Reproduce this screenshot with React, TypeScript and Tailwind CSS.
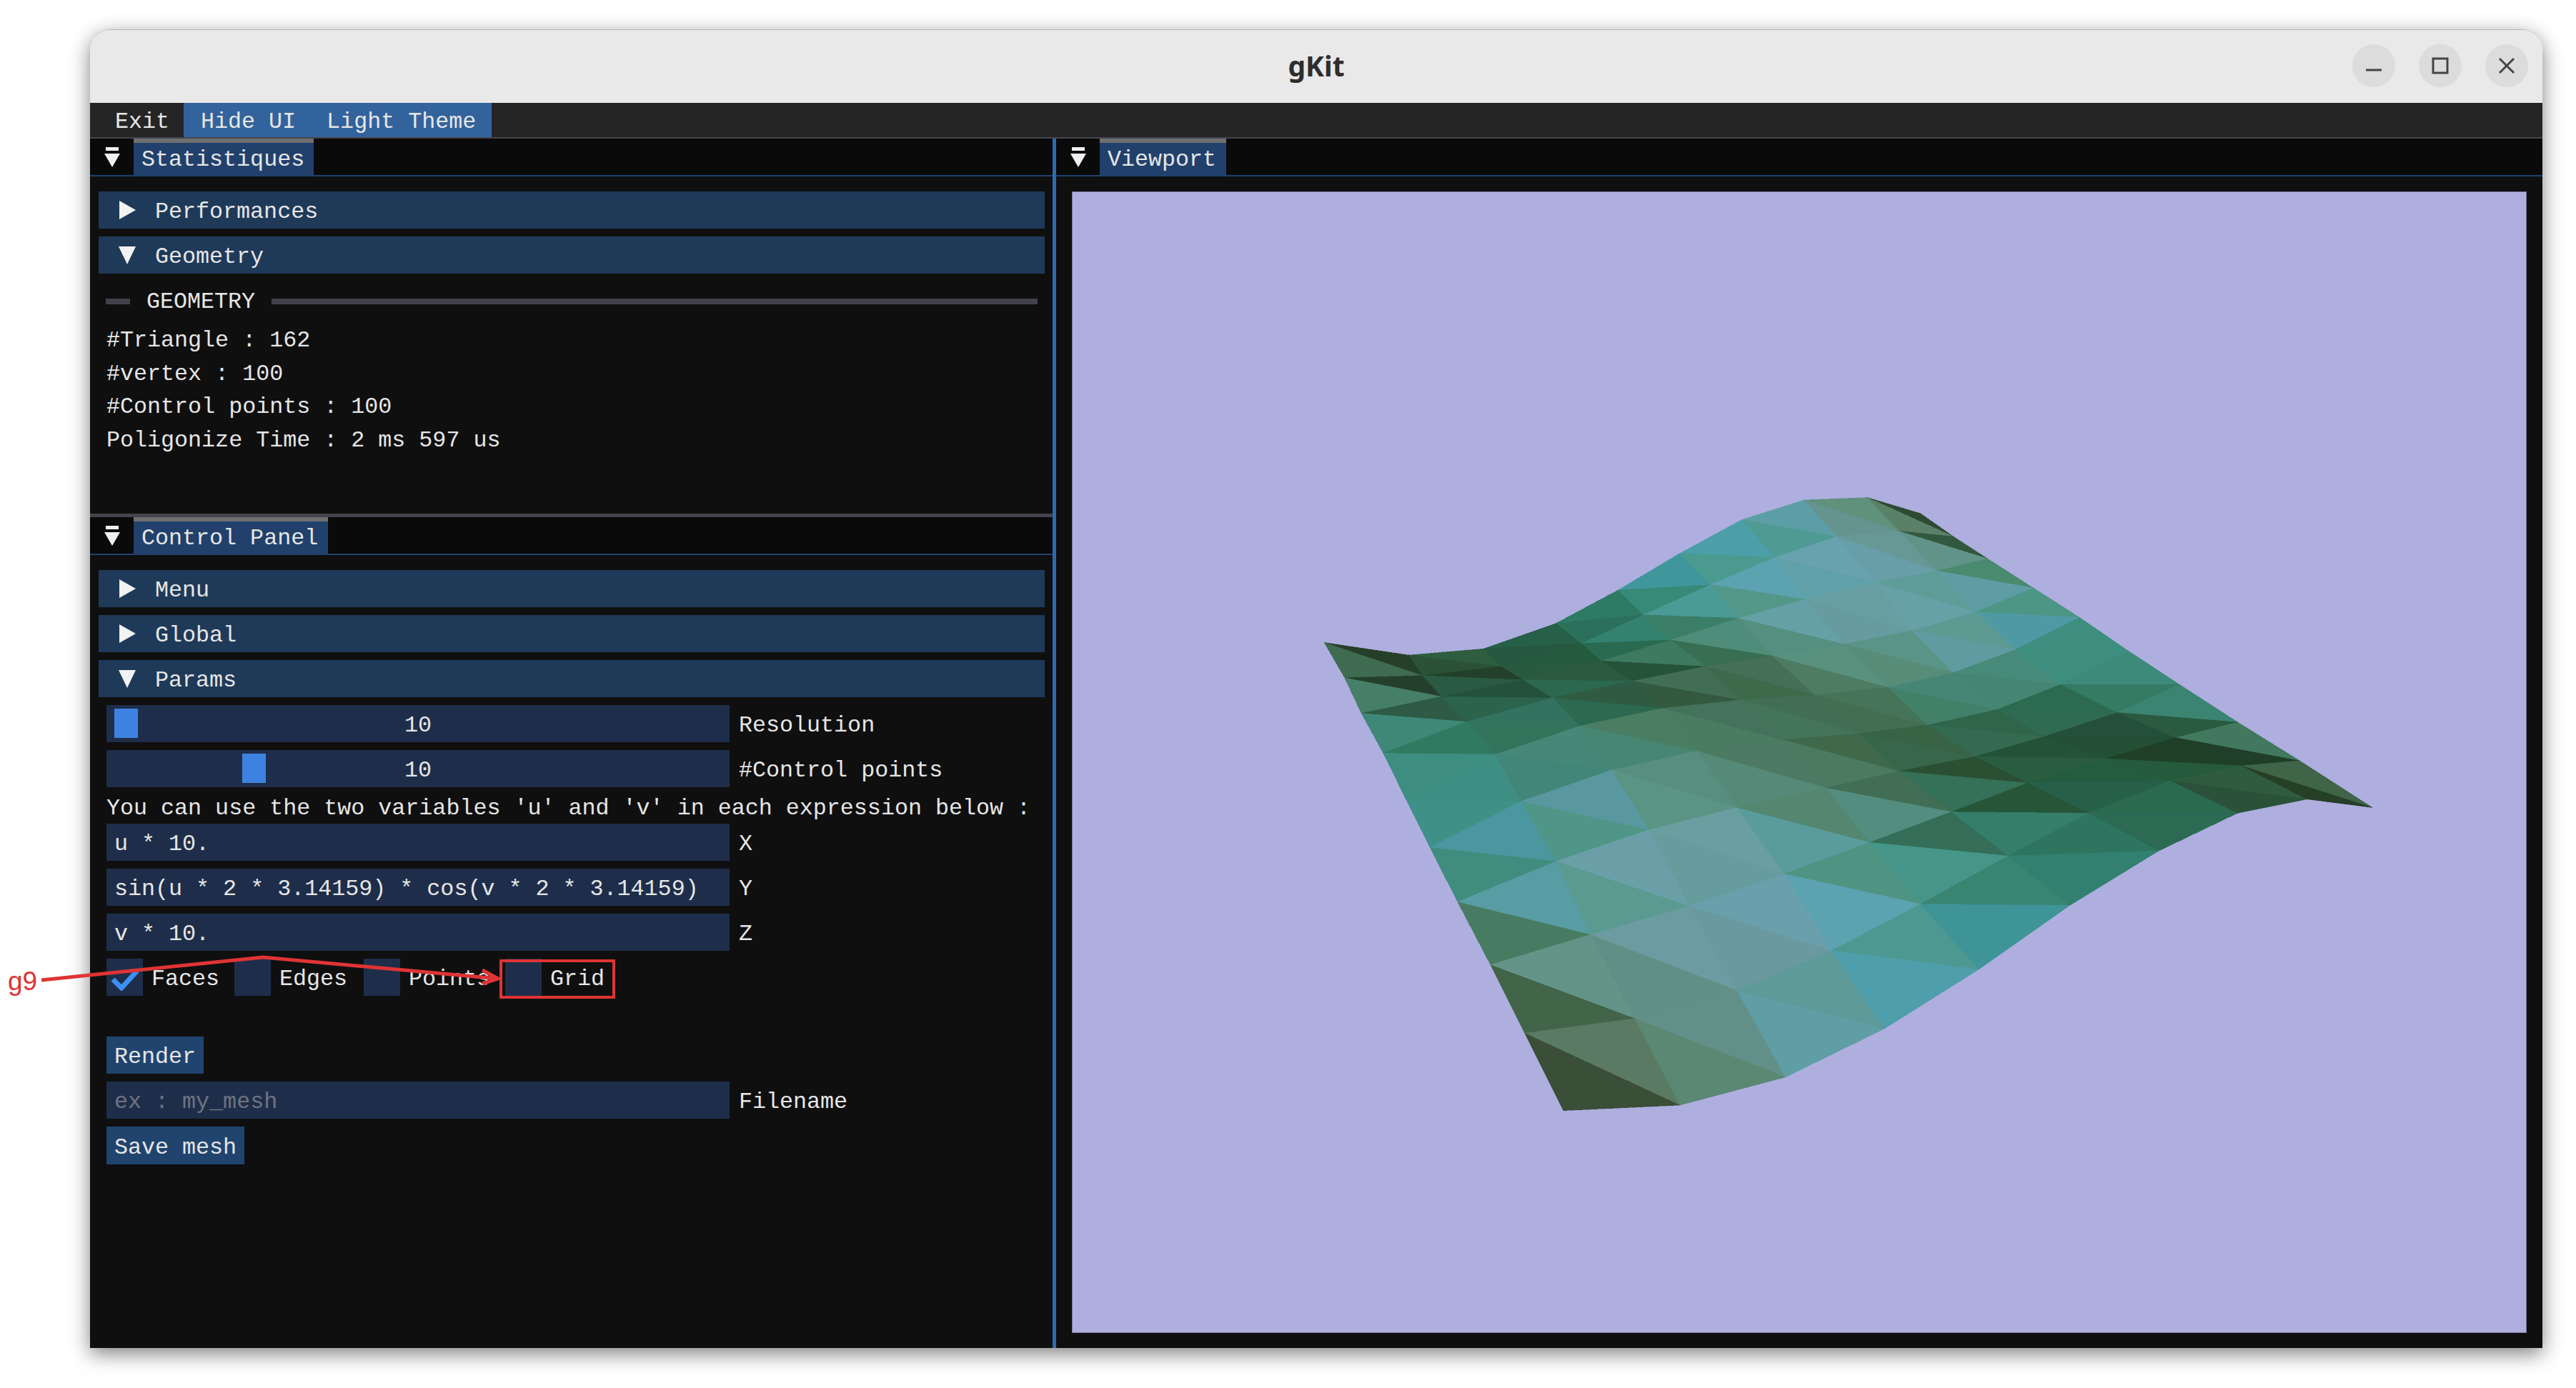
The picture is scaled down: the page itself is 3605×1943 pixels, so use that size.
import React from 'react';

const mono = { fontFamily: '"Liberation Mono", monospace' };

// Mesh vertices, traced column by column (10 x 10 grid)
const columns: number[][][] = [
  [[52,408],[80,492],[103,577],[133,672],[165,785],[197,897],[235,1027],[280,1177],[327,1340],[380,1525]],
  [[168,438],[187,487],[213,537],[247,597],[287,675],[322,787],[370,930],[417,1105],[478,1305],[540,1512]],
  [[270,423],[295,465],[325,497],[365,540],[403,607],[447,712],[497,855],[553,1037],[618,1238],[685,1445]],
  [[370,362],[405,410],[432,452],[475,500],[515,565],[563,667],[618,802],[683,960],[748,1143],[820,1330]],
  [[455,283],[490,342],[527,402],[575,465],[622,545],[680,640],[740,755],[800,885],[870,1032],[950,1188]],
  [[540,195],[582,270],[620,350],[667,440],[725,533],[785,625],[840,715],[912,812],[990,917],[1075,1035]],
  [[625,115],[670,205],[712,305],[765,412],[825,515],[880,605],[945,680],[1017,743],[1100,815],[1197,905]],
  [[710,68],[755,155],[808,265],[858,380],[915,480],[975,568],[1040,632],[1125,685],[1213,738],[1305,815]],
  [[797,62],[840,142],[893,237],[945,335],[1000,425],[1062,508],[1140,575],[1220,635],[1310,702],[1400,782]],
  [[870,100],[915,155],[962,208],[1025,278],[1088,348],[1155,428],[1225,508],[1305,598],[1390,690],[1490,802]],
];

// Per quad: [upper triangle, lower triangle]
const quadColors: string[][][] = [
  [['#263f28','#3f6b50'],['#24402c','#467f68'],['#2f5a45','#3f8878'],['#317a62','#3d8d80'],['#3e8f83','#3f9087'],['#4a97a0','#408d7f'],['#589da3','#477c62'],['#649388','#426448'],['#5a7a64','#3a4e38']],
  [['#2f5d40','#2b5237'],['#23402a','#2a5a42'],['#23513a','#2b634c'],['#347260','#32745c'],['#458878','#42867a'],['#5a98a0','#509688'],['#6a9fa8','#5a9a90'],['#6c9ba2','#628f85'],['#629088','#5a8872']],
  [['#276048','#25583f'],['#245a3e','#2a5a3e'],['#2b5a3e','#2c6850'],['#2f5b42','#2d6850'],['#4a7d62','#468672'],['#578e80','#5a9485'],['#6a9ea0','#669c9e'],['#6aa0ac','#6a9aa0'],['#5d9a98','#5f9ea5']],
  [['#2e7a64','#2b705a'],['#338270','#2a6a50'],['#3d7a60','#25533a'],['#426e55','#33593f'],['#44725a','#4a7c62'],['#4c7a62','#558a78'],['#548670','#5a9c9c'],['#4f9482','#5ca2b0'],['#4d9890','#4f9eab']],
  [['#3f979c','#378a78'],['#4a9a96','#3a7e68'],['#4f8c7a','#386e52'],['#466f58','#3c6a4a'],['#426e56','#44745a'],['#40694c','#4c7a60'],['#426e55','#528d80'],['#346e58','#459688'],['#3a8472','#3f9498']],
  [['#4c9ea9','#4a9a90'],['#5ca2b0','#529788'],['#64a0a5','#548f80'],['#58917e','#4e7c62'],['#457458','#436e52'],['#386345','#37664a'],['#2b4f33','#357058'],['#265538','#347e6a'],['#2e7560','#318070']],
  [['#5c9ea5','#4f9a92'],['#68a2ae','#60a0a8'],['#669ea2','#669ca0'],['#5a9486','#578c78'],['#468674','#42806a'],['#2f6548','#346a50'],['#245236','#2a5c40'],['#245c3f','#27604a'],['#2c6a50','#2c6a54']],
  [['#5f917c','#659490'],['#679896','#689ea8'],['#5e9c98','#68a0a8'],['#5c9a92','#5f9ba0'],['#468a7a','#448672'],['#2c6b52','#2f6a52'],['#24503a','#234f35'],['#1f3f27','#255a3c'],['#2f5c3f','#2a5238']],
  [['#2e4a33','#5a8068'],['#32593f','#619388'],['#4a8a6e','#5f9da5'],['#4d9584','#4f9aa2'],['#3e8e80','#3e8e80'],['#3d8a7b','#357a62'],['#3c8472','#2a5a40'],['#41785e','#203f28'],['#3f6448','#263f27']],
];

const Mesh = () => (
  <svg
    className="absolute left-[299px] top-[391px] w-[1600px] h-[920px]"
    viewBox="0 0 1568 1568"
    preserveAspectRatio="none"
    shapeRendering="crispEdges"
  >
    {quadColors.map((col, j) =>
      col.map((quad, i) => {
        const a = columns[j][i];
        const b = columns[j + 1][i];
        const c = columns[j + 1][i + 1];
        const d = columns[j][i + 1];
        return (
          <g key={`${j}-${i}`}>
            <polygon points={`${a} ${b} ${c}`} fill={quad[0]} stroke={quad[0]} strokeWidth="0.5" />
            <polygon points={`${a} ${c} ${d}`} fill={quad[1]} stroke={quad[1]} strokeWidth="0.5" />
          </g>
        );
      })
    )}
  </svg>
);

const TabMenuIcon = () => (
  <svg className="w-[24px] h-[30px]" viewBox="0 0 24 30">
    <rect x="3" y="1" width="18" height="5" fill="#f0f0f0" />
    <polygon points="1,10 23,10 12,29" fill="#f0f0f0" />
  </svg>
);

const Tab = ({ title, width }: { title: string; width: string }) => (
  <div className="h-[53px] flex bg-[#0a0a0a] border-b-2 border-[#21426e] shrink-0">
    <div className="w-[61px] pl-[19px] flex items-center">
      <TabMenuIcon />
    </div>
    <div className={`${width} h-[53px] bg-[#21416c] border-t-[6px] border-[#6f6f6f] pl-[11px] pt-[2px] flex items-center text-[#e6e6e6]`}>
      {title}
    </div>
  </div>
);

const TreeHeader = ({ label, open, className = '' }: { label: string; open?: boolean; className?: string }) => (
  <div className={`h-[52px] bg-[#1f3a59] flex items-center pl-[27px] text-[#e6e6e6] ${className}`}>
    <svg className="w-[26px] h-[26px] mr-[26px]" viewBox="0 0 26 26">
      {open ? <polygon points="1,1 25,1 13,26" fill="#f2f2f2" /> : <polygon points="2,0 25,13 2,26" fill="#f2f2f2" />}
    </svg>
    <span className="pt-[8px]">{label}</span>
  </div>
);

const Field = ({ children, center, label, muted }: { children: React.ReactNode; center?: boolean; label: string; muted?: boolean }) => (
  <div className="flex items-center h-[52px] mt-[11px] ml-[11px]">
    <div
      className={`relative w-[872px] h-full bg-[#1e2e4a] flex items-center px-[11px] pt-[8px] ${center ? 'justify-center' : ''} ${muted ? 'text-[#6f7480]' : 'text-[#e6e6e6]'}`}
    >
      {children}
    </div>
    <span className="ml-[13px] pt-[8px] text-[#e6e6e6]">{label}</span>
  </div>
);

const Check = ({ label, checked, width }: { label: string; checked?: boolean; width: string }) => (
  <div className={`${width} flex items-center h-full`}>
    <div className="w-[51px] h-full bg-[#1e2e4a] flex items-center justify-center">
      {checked && (
        <svg className="w-[40px] h-[30px] mt-[8px]" viewBox="0 0 40 30">
          <polyline points="3,14 15,26 37,2" fill="none" stroke="#3d8ff0" strokeWidth="7" />
        </svg>
      )}
    </div>
    <span className="ml-[12px] pt-[8px] text-[#e6e6e6]">{label}</span>
  </div>
);

const Annotation = () => (
  <>
    <svg className="absolute inset-0 w-[3605px] h-[1943px] pointer-events-none" viewBox="0 0 3605 1943">
      <polyline points="58,1372 368,1340 697,1370" fill="none" stroke="#df3434" strokeWidth="5" />
      <polyline points="675,1358 697,1370 675,1377" fill="none" stroke="#df3434" strokeWidth="5" />
      <rect x="701" y="1345" width="158" height="51" fill="none" stroke="#df3434" strokeWidth="4" />
    </svg>
    <span
      className="absolute left-[11px] top-[1352px] text-[37px] leading-[44px] text-[#df3434]"
      style={{ fontFamily: '"Liberation Sans", sans-serif' }}
    >
      g9
    </span>
  </>
);

export default function App() {
  return (
    <div className="relative w-[3605px] h-[1943px] overflow-hidden bg-white pl-[126px] pr-[47px] pt-[41px] text-[31.7px] leading-none" style={mono}>
      <div className="h-[1846px] flex flex-col rounded-t-[28px] overflow-hidden border-t border-[#b5b5b5] shadow-[0_8px_28px_rgba(0,0,0,0.5)]">
        {/* Title bar */}
        <div className="h-[102px] bg-[#e9e9e9] relative flex items-center justify-center shrink-0">
          <span className="text-[39px] font-bold text-[#2e2e2e] pb-[4px]" style={{ fontFamily: '"Noto Sans", sans-serif' }}>
            gKit
          </span>
          <div className="absolute right-[20px] top-[20px] flex gap-[33px]">
            <div className="w-[60px] h-[60px] rounded-full bg-[#dcdcdc] flex items-center justify-center">
              <svg className="w-[24px] h-[24px]" viewBox="0 0 24 24">
                <line x1="1" y1="18" x2="23" y2="18" stroke="#444" strokeWidth="3" />
              </svg>
            </div>
            <div className="w-[60px] h-[60px] rounded-full bg-[#dcdcdc] flex items-center justify-center">
              <svg className="w-[24px] h-[24px]" viewBox="0 0 24 24">
                <rect x="2" y="2" width="20" height="20" fill="none" stroke="#444" strokeWidth="3" />
              </svg>
            </div>
            <div className="w-[60px] h-[60px] rounded-full bg-[#dcdcdc] flex items-center justify-center">
              <svg className="w-[24px] h-[24px]" viewBox="0 0 24 24">
                <path d="M2 2 L22 22 M22 2 L2 22" fill="none" stroke="#444" strokeWidth="3" />
              </svg>
            </div>
          </div>
        </div>

        {/* Menu bar */}
        <div className="h-[50px] bg-[#252525] border-b-2 border-[#45454d] flex text-[#e6e6e6] shrink-0">
          <div className="w-[131px] pl-[35px] pt-[8px] flex items-center">Exit</div>
          <div className="w-[431px] bg-[#33639c] pl-[24px] pt-[8px] flex items-center gap-[43px]">
            <span>Hide UI</span>
            <span>Light Theme</span>
          </div>
        </div>

        <div className="flex-1 flex bg-[#0f0f0f] min-h-0">
          {/* Left column */}
          <div className="w-[1347px] flex flex-col">
            <div className="h-[530px] flex flex-col border-b-[5px] border-[#44444f] shrink-0">
              <Tab title="Statistiques" width="w-[252px]" />
              <div className="pt-[21px] pl-[12px] pr-[11px]">
                <TreeHeader label="Performances" />
                <TreeHeader label="Geometry" open className="mt-[11px]" />
                <div className="flex items-center h-[40px] mt-[19px] ml-[10px] mr-[10px] text-[#e6e6e6]">
                  <div className="w-[34px] h-[8px] bg-[#42424d]" />
                  <span className="ml-[23px] mr-[23px] pt-[4px]">GEOMETRY</span>
                  <div className="flex-1 h-[8px] bg-[#42424d]" />
                </div>
                <div className="ml-[11px] mt-[11px] flex flex-col text-[#e6e6e6]">
                  <div className="h-[46.4px] pt-[4px] flex items-center">#Triangle : 162</div>
                  <div className="h-[46.4px] pt-[4px] flex items-center">#vertex : 100</div>
                  <div className="h-[46.4px] pt-[4px] flex items-center">#Control points : 100</div>
                  <div className="h-[46.4px] pt-[4px] flex items-center">Poligonize Time : 2 ms 597 us</div>
                </div>
              </div>
            </div>

            <Tab title="Control Panel" width="w-[272px]" />
            <div className="pt-[21px] pl-[12px] pr-[11px]">
              <TreeHeader label="Menu" />
              <TreeHeader label="Global" className="mt-[11px]" />
              <TreeHeader label="Params" open className="mt-[11px]" />

              <Field center label="Resolution">
                <div className="absolute left-[11px] top-[5px] w-[33px] h-[41px] bg-[#3d82e0]" />
                10
              </Field>
              <Field center label="#Control points">
                <div className="absolute left-[190px] top-[5px] w-[33px] h-[41px] bg-[#3d82e0]" />
                10
              </Field>

              <div className="ml-[11px] mt-[11px] h-[40px] flex items-center whitespace-nowrap text-[#e6e6e6]">
                You can use the two variables 'u' and 'v' in each expression below :
              </div>
              <div className="mt-[6px]">
                <div className="-mt-[11px]">
                  <Field label="X">u * 10.</Field>
                </div>
              </div>
              <Field label="Y">sin(u * 2 * 3.14159) * cos(v * 2 * 3.14159)</Field>
              <Field label="Z">v * 10.</Field>

              <div className="flex h-[52px] mt-[11px] ml-[11px]">
                <Check label="Faces" checked width="w-[179px]" />
                <Check label="Edges" width="w-[181px]" />
                <Check label="Points" width="w-[198px]" />
                <Check label="Grid" width="w-[150px]" />
              </div>

              <div className="mt-[57px] ml-[11px] w-[136px] h-[52px] bg-[#21446f] flex items-center pl-[11px] pt-[8px] text-[#e6e6e6]">Render</div>
              <Field label="Filename" muted>ex : my_mesh</Field>
              <div className="mt-[11px] ml-[11px] w-[193px] h-[53px] bg-[#21446f] flex items-center pl-[11px] pt-[8px] text-[#e6e6e6]">Save mesh</div>
            </div>
          </div>

          {/* Divider */}
          <div className="w-[5px] bg-[#2d6ab0] shrink-0" />

          {/* Viewport */}
          <div className="flex-1 flex flex-col min-w-0">
            <Tab title="Viewport" width="w-[177px]" />
            <div className="flex-1 flex pt-[21px] pb-[21px] pl-[22px] pr-[22px] min-h-0">
              <div className="relative flex-1 bg-[#aeaedf] border border-[#77779a]">
                <Mesh />
              </div>
            </div>
          </div>
        </div>
      </div>
      <Annotation />
    </div>
  );
}
